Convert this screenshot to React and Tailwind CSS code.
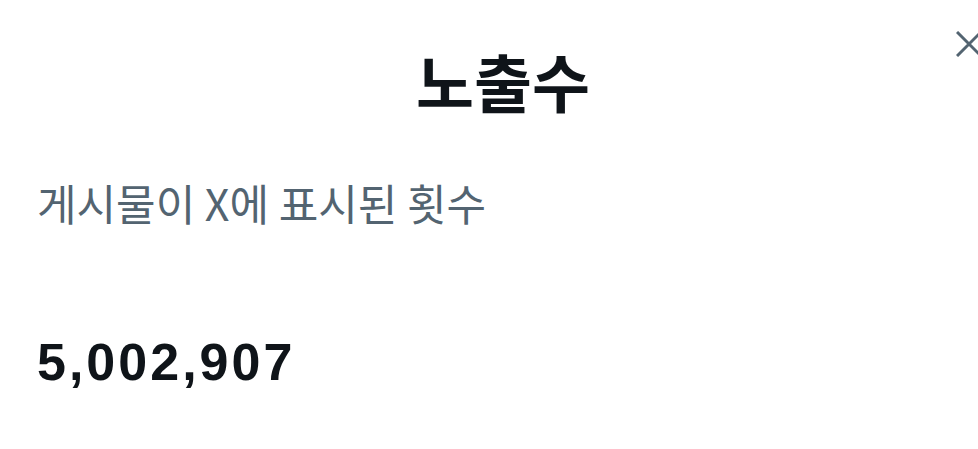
export default function App() {
  return (
    <div className="relative w-[978px] h-[449px] overflow-hidden bg-white" style={{ fontFamily: '"Noto Sans CJK KR", "Noto Sans", sans-serif' }}>
      <button className="absolute left-[956px] top-[31px] w-[26px] h-[26px] text-[#536471]" aria-label="close">
        <svg viewBox="0 0 26 26" width="26" height="26" fill="none" stroke="currentColor" strokeWidth="3">
          <path d="M1 1 L25 25 M25 1 L1 25" />
        </svg>
      </button>
      <div className="flex justify-center pt-[42px] pl-[28px]">
        <h1 className="text-[63px] leading-[76px] font-bold text-[#0f1419]">노출수</h1>
      </div>
      <div className="flex flex-col pl-[37px]">
        <p className="mt-[56px] text-[43px] leading-[56px] text-[#536471]">게시물이 X에 표시된 횟수</p>
        <div className="mt-[102px] text-[52px] leading-[60px] font-bold tracking-[3px] text-[#0f1419]" style={{ fontFamily: '"Liberation Sans", Arial, sans-serif' }}>5,002,907</div>
      </div>
    </div>
  );
}
